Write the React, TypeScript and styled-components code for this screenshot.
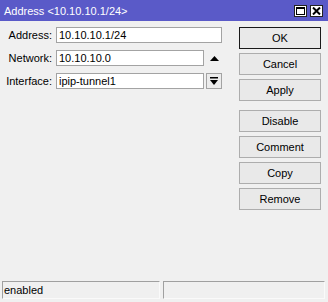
import styled, { createGlobalStyle } from "styled-components";

const GlobalStyle = createGlobalStyle`
  html, body {
    margin: 0;
    padding: 0;
    background: #f0f0f0;
  }
  body {
    font-family: "Liberation Sans", Arial, sans-serif;
    font-size: 11px;
    color: #000;
  }
`;

const Window = styled.div`
  width: 328px;
  height: 302px;
  display: flex;
  flex-direction: column;
  background: #f0f0f0;
  overflow: hidden;
`;

const TitleBar = styled.div`
  height: 21px;
  flex: none;
  display: flex;
  align-items: center;
  justify-content: space-between;
  padding: 0 5px 0 4px;
  background: #5a5ac8;
  color: #fff;
  font-size: 11px;
`;

const TitleButtons = styled.div`
  display: flex;
  gap: 3px;
`;

const TitleButton = styled.div`
  width: 13px;
  height: 12px;
  background: #fff;
  border: 1px solid #222;
  box-sizing: border-box;
  display: flex;
  align-items: center;
  justify-content: center;
`;

const Body = styled.div`
  flex: 1;
  display: flex;
  gap: 17px;
  padding: 6px 7px 0 7px;
`;

const Form = styled.div`
  display: grid;
  grid-template-columns: 45px 166px;
  grid-auto-rows: 16px;
  column-gap: 4px;
  row-gap: 7px;
  align-content: start;
`;

const Label = styled.label`
  display: flex;
  align-items: center;
  justify-content: flex-end;
  white-space: nowrap;
`;

const Field = styled.div`
  display: flex;
  align-items: stretch;
  gap: 2px;
`;

const Input = styled.div<{ $short?: boolean }>`
  box-sizing: border-box;
  width: ${({ $short }) => ($short ? "148px" : "166px")};
  height: 16px;
  background: #fff;
  border: 1px solid #a3a3a3;
  padding: 0 2px;
  display: flex;
  align-items: center;
  white-space: nowrap;
`;

const ArrowCell = styled.div`
  width: 16px;
  display: flex;
  align-items: center;
  justify-content: center;
`;

const DropButton = styled.div`
  box-sizing: border-box;
  width: 16px;
  height: 16px;
  border: 1px solid #a3a3a3;
  background: #ececec;
  display: flex;
  align-items: center;
  justify-content: center;
`;

const Buttons = styled.div`
  display: flex;
  flex-direction: column;
  gap: 4px;
  width: 82px;
`;

const Button = styled.div<{ $primary?: boolean; $spaced?: boolean }>`
  box-sizing: border-box;
  height: 22px;
  display: flex;
  align-items: center;
  justify-content: center;
  background: #e9e9e9;
  border: 1px solid ${({ $primary }) => ($primary ? "#1a1a1a" : "#adadad")};
  margin-top: ${({ $spaced }) => ($spaced ? "5px" : "0")};
`;

const StatusBar = styled.div`
  flex: none;
  display: flex;
  gap: 3px;
  height: 18px;
  padding: 0 3px 3px 2px;
`;

const StatusPanel = styled.div<{ $width: number }>`
  box-sizing: border-box;
  width: ${({ $width }) => $width}px;
  border-top: 1px solid #a0a0a0;
  border-left: 1px solid #a0a0a0;
  border-bottom: 1px solid #fafafa;
  border-right: 1px solid #fafafa;
  padding-left: 1px;
  display: flex;
  align-items: center;
`;

const MaxIcon = () => (
  <svg width="9" height="8" viewBox="0 0 9 8">
    <rect x="0.5" y="0.5" width="8" height="7" fill="none" stroke="#000" />
    <rect x="0" y="0" width="9" height="2" fill="#000" />
  </svg>
);

const CloseIcon = () => (
  <svg width="9" height="8" viewBox="0 0 9 8">
    <path d="M1 0.5 L8 7.5 M8 0.5 L1 7.5" stroke="#000" strokeWidth="2" />
  </svg>
);

const UpArrow = () => (
  <svg width="9" height="5" viewBox="0 0 9 5">
    <path d="M0 5 L4.5 0 L9 5 Z" fill="#000" />
  </svg>
);

const DropIcon = () => (
  <svg width="8" height="8" viewBox="0 0 8 8">
    <rect x="0" y="0" width="8" height="1.5" fill="#000" />
    <path d="M0 3 L8 3 L4 8 Z" fill="#000" />
  </svg>
);

export default function App() {
  return (
    <>
      <GlobalStyle />
      <Window>
        <TitleBar>
          <span>Address &lt;10.10.10.1/24&gt;</span>
          <TitleButtons>
            <TitleButton>
              <MaxIcon />
            </TitleButton>
            <TitleButton>
              <CloseIcon />
            </TitleButton>
          </TitleButtons>
        </TitleBar>
        <Body>
          <Form>
            <Label>Address:</Label>
            <Input>10.10.10.1/24</Input>
            <Label>Network:</Label>
            <Field>
              <Input $short>10.10.10.0</Input>
              <ArrowCell>
                <UpArrow />
              </ArrowCell>
            </Field>
            <Label>Interface:</Label>
            <Field>
              <Input $short>ipip-tunnel1</Input>
              <DropButton>
                <DropIcon />
              </DropButton>
            </Field>
          </Form>
          <Buttons>
            <Button $primary>OK</Button>
            <Button>Cancel</Button>
            <Button>Apply</Button>
            <Button $spaced>Disable</Button>
            <Button>Comment</Button>
            <Button>Copy</Button>
            <Button>Remove</Button>
          </Buttons>
        </Body>
        <StatusBar>
          <StatusPanel $width={158}>enabled</StatusPanel>
          <StatusPanel $width={162} />
        </StatusBar>
      </Window>
    </>
  );
}
